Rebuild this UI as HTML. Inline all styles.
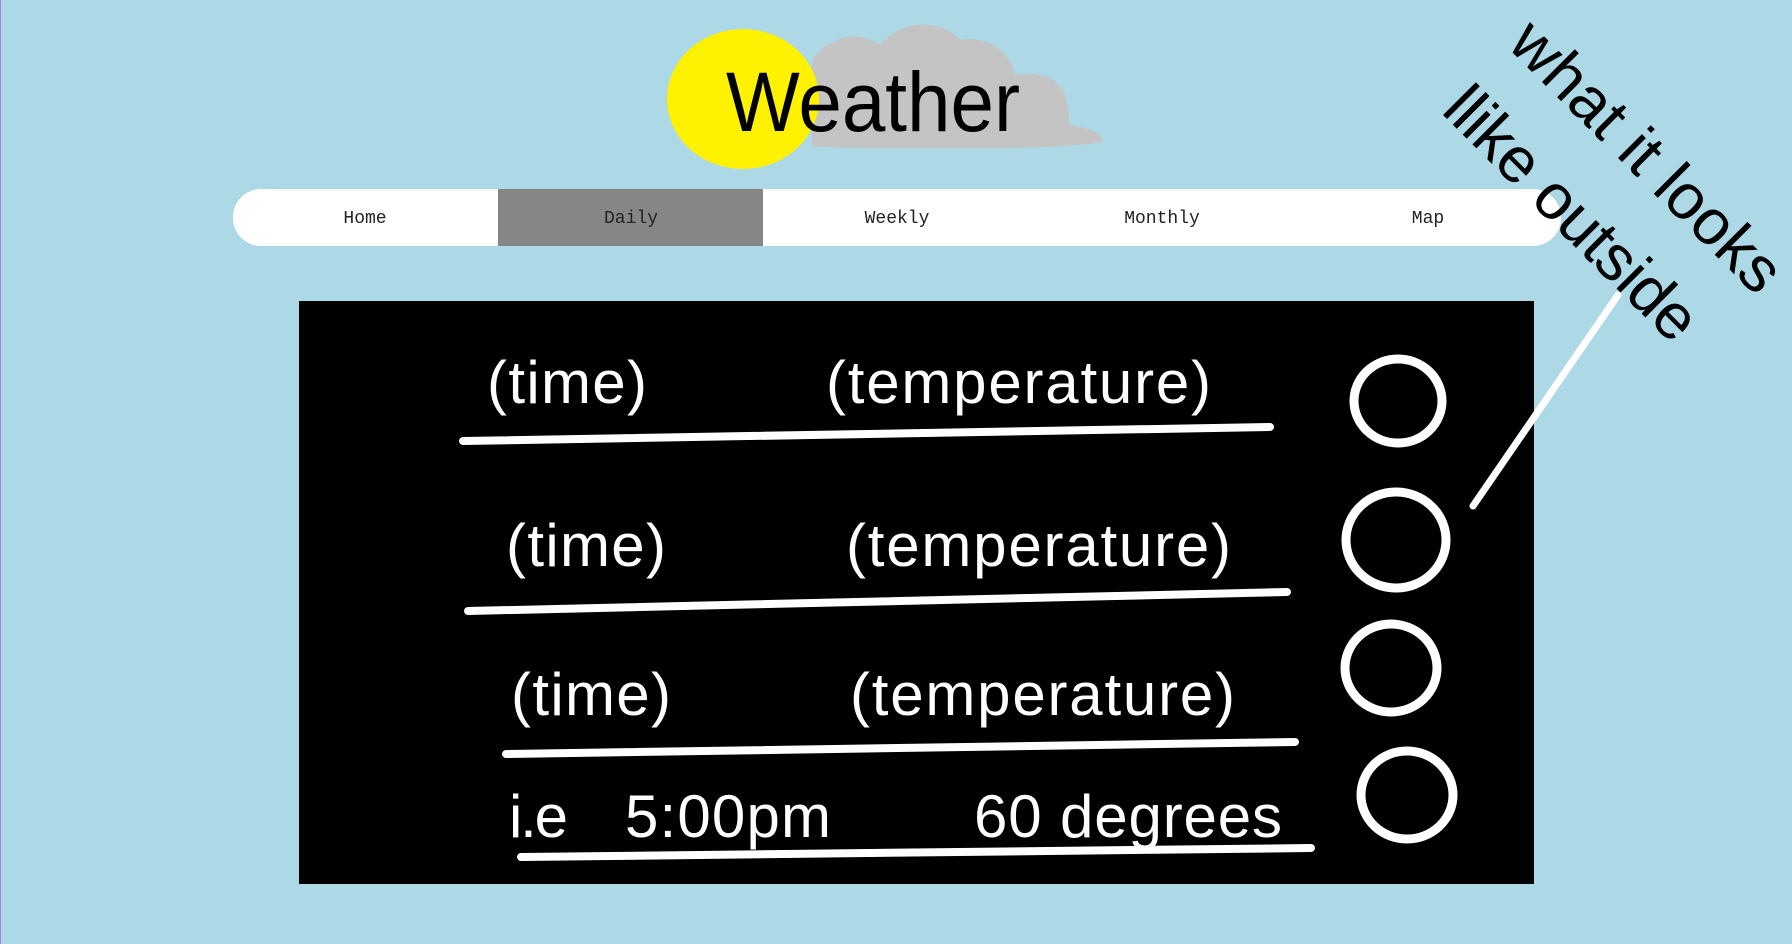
<!DOCTYPE html>
<html><head><meta charset="utf-8"><style>
html,body{margin:0;padding:0;background:#add8e6;width:1792px;height:944px;overflow:hidden}
svg{display:block}
</style></head><body>
<svg width="1792" height="944" viewBox="0 0 1792 944" xmlns="http://www.w3.org/2000/svg">
<rect x="0" y="0" width="1" height="944" fill="#9b7fd8"/>
<path d="M812 60 C830 35 860 30 880 45 C900 20 940 18 960 40 C985 35 1010 50 1015 75 C1040 70 1060 80 1065 95 C1070 110 1068 120 1070 125 C1090 128 1105 135 1102 142 C1060 150 950 148 850 148 L812 146 Z" fill="#c4c4c4"/>
<ellipse cx="743" cy="99" rx="76" ry="70" fill="#fff200"/>
<text x="726" y="131" font-family="Liberation Sans, DejaVu Sans, sans-serif" font-size="84" fill="#000" textLength="294" lengthAdjust="spacingAndGlyphs">Weather</text>
<rect x="233" y="189" width="1328" height="57" rx="28" fill="#fff"/>
<rect x="498" y="189" width="265" height="57" fill="#868686"/>
<g font-family="Liberation Mono, monospace" font-size="18" fill="#222" text-anchor="middle">
<text x="365" y="223">Home</text>
<text x="631" y="223">Daily</text>
<text x="897" y="223">Weekly</text>
<text x="1162" y="223">Monthly</text>
<text x="1428" y="223">Map</text>
</g>
<rect x="299" y="301" width="1235" height="583" fill="#000"/>
<g font-family="Liberation Sans, DejaVu Sans, sans-serif" font-size="60" fill="#fff" lengthAdjust="spacingAndGlyphs">
<text x="487" y="403" textLength="160">(time)</text>
<text x="826" y="403" textLength="385">(temperature)</text>
<text x="506" y="566" textLength="160">(time)</text>
<text x="846" y="566" textLength="385">(temperature)</text>
<text x="511" y="715" textLength="160">(time)</text>
<text x="850" y="715" textLength="385">(temperature)</text>
<text x="509" y="837" textLength="59">i.e</text>
<text x="625" y="837" textLength="206">5:00pm</text>
<text x="974" y="837" textLength="308">60 degrees</text>
</g>
<g stroke="#fff" stroke-width="8" stroke-linecap="round" fill="none">
<line x1="463" y1="441" x2="1270" y2="427"/>
<line x1="468" y1="611" x2="1287" y2="592"/>
<line x1="506" y1="754" x2="1295" y2="742"/>
<line x1="521" y1="857" x2="1311" y2="848"/>
<line x1="1473" y1="506" x2="1618" y2="295" stroke-width="7"/>
</g>
<g stroke="#fff" stroke-width="9" fill="none">
<ellipse cx="1398" cy="401" rx="44" ry="42"/>
<ellipse cx="1396" cy="540" rx="50" ry="48"/>
<ellipse cx="1391" cy="668" rx="46" ry="44"/>
<ellipse cx="1407" cy="795" rx="46" ry="44"/>
</g>
<g font-family="Liberation Sans, DejaVu Sans, sans-serif" font-size="64" fill="#000" lengthAdjust="spacingAndGlyphs">
<text transform="translate(1506,46) rotate(45)" textLength="355">what it looks</text>
<text transform="translate(1440,112) rotate(45)" textLength="330">llike outside</text>
</g>
</svg>
</body></html>
